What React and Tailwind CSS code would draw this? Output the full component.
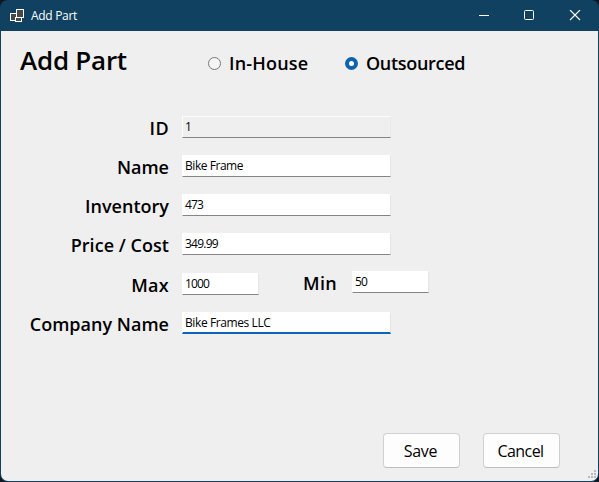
import React from "react";

const LABEL = "block h-6 whitespace-nowrap text-right text-[18px] leading-6 font-semibold";

function Field({ value, className = "", disabled = false, focused = false }) {
  const tone = disabled
    ? "border border-[#fcfcfc] border-r-[#e9e9e9] border-b-[#858585] bg-[#efefef]"
    : focused
      ? "border border-white border-r-[#e5e5e5] border-b-2 border-b-[#0f65b5] bg-white"
      : "border border-white border-r-[#e5e5e5] border-b-[#858585] bg-white";
  return (
    <div className={`h-[22px] shrink-0 pl-[2px] text-[12px] leading-[20px] whitespace-nowrap ${tone} ${className}`}>
      {value}
    </div>
  );
}

function Row({ label, tracking, height = "h-[39px]", children }) {
  return (
    <div className={`flex items-start ${height}`}>
      <div className="w-[168px] shrink-0">
        <span className={`${LABEL} ${tracking}`}>{label}</span>
      </div>
      {children}
    </div>
  );
}

function Button({ children, tracking }) {
  return (
    <button className={`h-[35px] w-[77px] rounded-[4px] border border-[#d0d0d0] border-b-[#bdbdbd] bg-[#fdfdfd] pr-[2px] text-[16px] leading-none ${tracking}`}>
      {children}
    </button>
  );
}

export default function App() {
  return (
    <div className="h-[482px] w-[599px] overflow-hidden bg-[#101722] font-['Open_Sans','Noto_Sans',sans-serif] text-black">
      <div className="flex h-full flex-col overflow-hidden rounded-[8px] bg-[#114161]">
        <header className="flex h-[31px] shrink-0 items-center justify-between text-white">
          <div className="flex items-center pl-[10px]">
            <svg width="15" height="14" viewBox="0 0 15 14" fill="#45494b" stroke="#fff" strokeWidth="1">
              <rect x="0.5" y="4.5" width="6" height="7" />
              <rect x="6.5" y="0.5" width="7" height="8" />
              <rect x="5.5" y="8.5" width="6" height="4" />
            </svg>
            <span className="ml-[6px] text-[12px] tracking-[-0.3px]">Add Part</span>
          </div>
          <svg width="103" height="12" viewBox="0 0 103 12" fill="none" stroke="#fff" className="mr-[17px]">
            <path d="M0 5.5H10" />
            <rect x="45.5" y="0.5" width="9" height="9" rx="1" />
            <path d="M91 0L101 10M101 0L91 10" strokeWidth="1.1" />
          </svg>
        </header>
        <main className="mx-px mb-px flex min-h-0 flex-1 flex-col rounded-b-[7px] bg-[#efefef]">
          <div className="flex h-[85px] shrink-0 items-start">
            <h1 className="w-[187px] pl-[19px] pt-[12px] text-[26px] leading-[34px] font-semibold whitespace-nowrap tracking-[-0.25px]">Add Part</h1>
            <div className="flex w-[137px] items-center pt-[20px] pl-[20px]">
              <span className="size-[13px] shrink-0 rounded-full border border-[#777] bg-[#f5f5f5]" />
              <span className="ml-[8px] text-[18px] leading-6 font-semibold whitespace-nowrap tracking-[0.2px]">In-House</span>
            </div>
            <div className="flex items-center pt-[20px] pl-[20px]">
              <span className="size-[13px] shrink-0 rounded-full border-4 border-[#0f62ae] bg-white" />
              <span className="ml-[8px] text-[18px] leading-6 font-semibold whitespace-nowrap tracking-[-0.3px]">Outsourced</span>
            </div>
          </div>
          <section className="flex flex-col">
            <Row label="ID" tracking="tracking-[0.4px]">
              <Field value="1" disabled className="ml-[13px] w-[209px]" />
            </Row>
            <Row label="Name" tracking="tracking-[0px]">
              <Field value="Bike Frame" className="ml-[13px] w-[209px] tracking-[-0.45px]" />
            </Row>
            <Row label="Inventory" tracking="tracking-[0.02px]">
              <Field value="473" className="ml-[13px] w-[209px] tracking-[-0.8px]" />
            </Row>
            <Row label="Price / Cost" tracking="tracking-[0.04px]" height="h-[40px]">
              <Field value="349.99" className="ml-[13px] w-[209px] tracking-[-0.75px]" />
            </Row>
            <Row label="Max" tracking="tracking-[0.3px]">
              <Field value="1000" className="ml-[13px] w-[77px] tracking-[-0.9px]" />
              <span className={`${LABEL} -mt-[2px] w-[78px] tracking-[0.3px]`}>Min</span>
              <Field value="50" className="-mt-[2px] ml-[15px] w-[77px] tracking-[-0.8px]" />
            </Row>
            <Row label="Company Name" tracking="tracking-[0.02px]">
              <Field value="Bike Frames LLC" focused className="ml-[13px] w-[209px] tracking-[-0.4px]" />
            </Row>
          </section>
          <footer className="mt-auto flex items-end justify-end">
            <div className="mb-[13px] flex gap-[23px]">
              <Button tracking="tracking-[-0.3px]">Save</Button>
              <Button tracking="tracking-[-0.55px]">Cancel</Button>
            </div>
            <svg width="38" height="11" viewBox="0 0 38 11" fill="#b9b9b9">
              <path d="M34 0h2v2h-2zM31 3h2v2h-2zM34 3h2v2h-2zM28 6h2v2h-2zM31 6h2v2h-2zM34 6h2v2h-2z" />
            </svg>
          </footer>
        </main>
      </div>
    </div>
  );
}
